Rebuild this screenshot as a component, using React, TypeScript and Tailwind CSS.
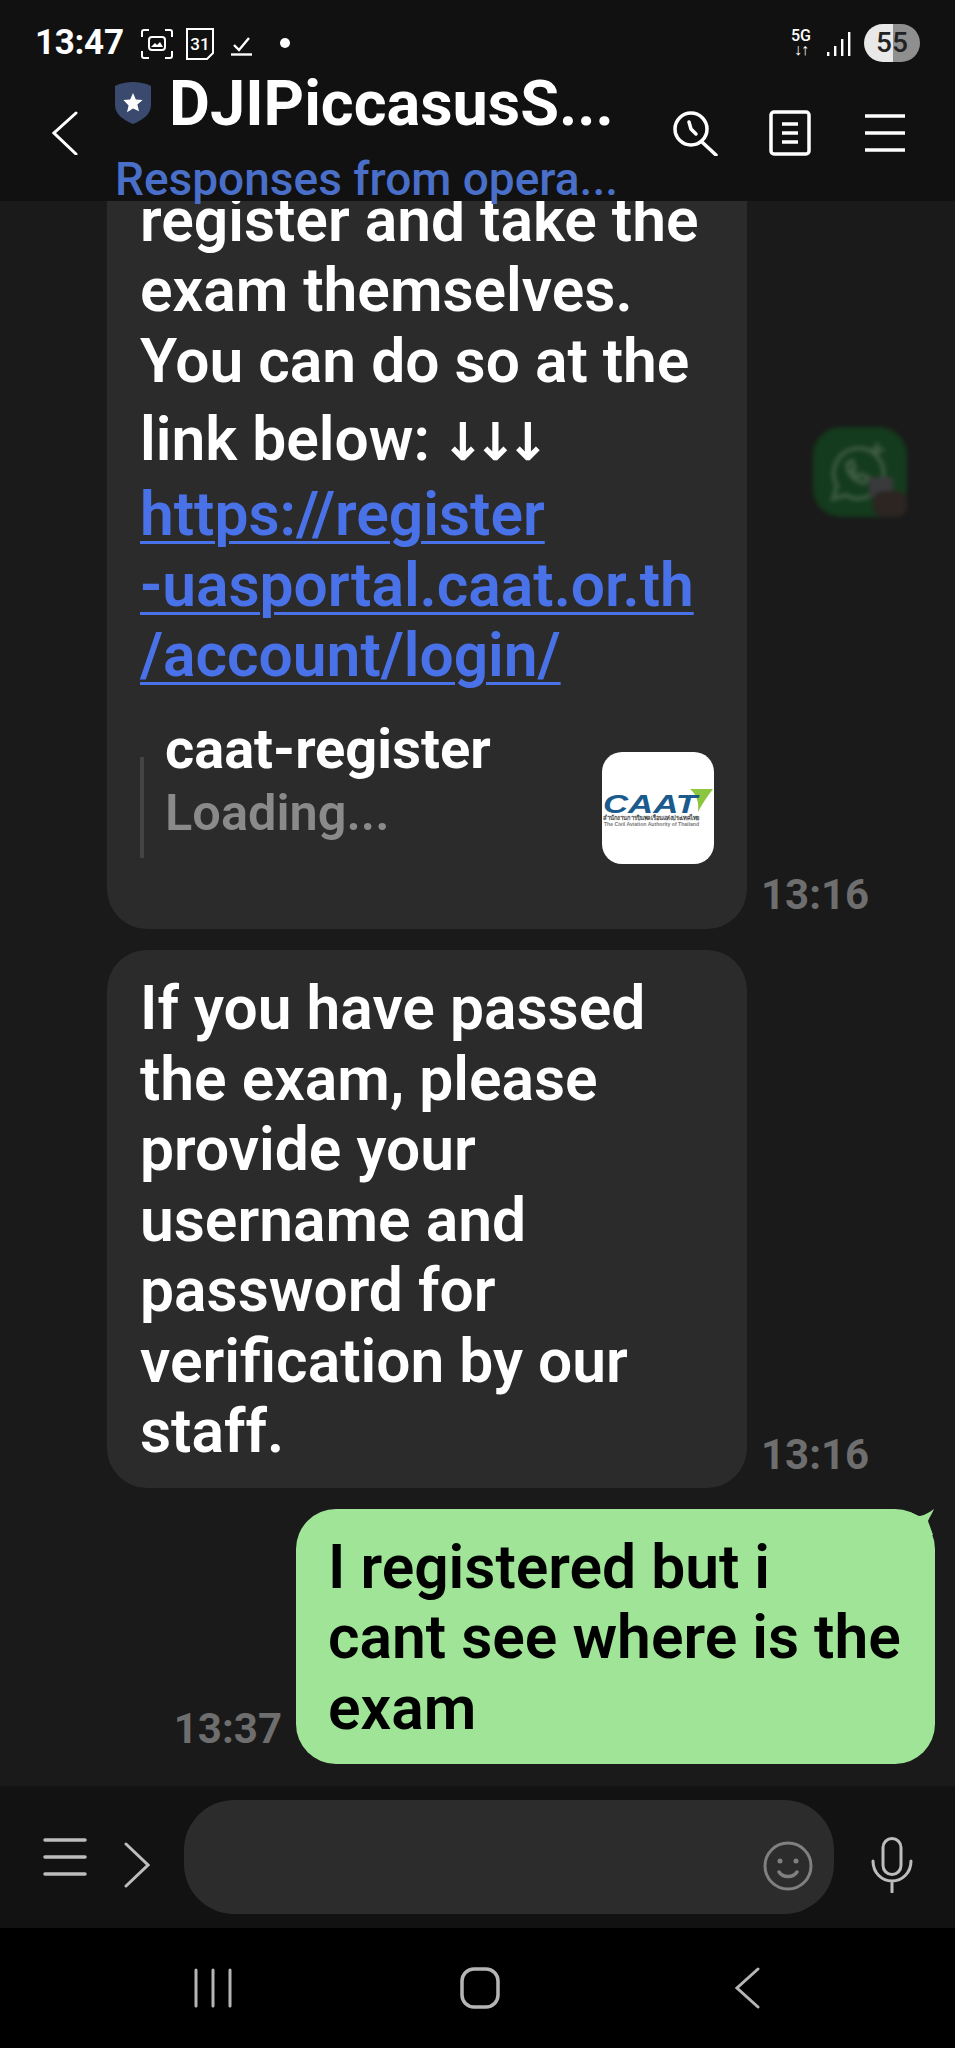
import React from "react";

const Line = ({ c = "" , children }: { c?: string; children: React.ReactNode }) => (
  <div className={"h-[70.5px] leading-[70.5px] whitespace-nowrap " + c}>{children}</div>
);

function StatusBar() {
  return (
    <div className="h-[72px] flex items-start pt-[24px] pl-[35px] pr-[35px] text-white">
      <span className="text-[35px] leading-[38px] font-bold w-[106px] tracking-[-0.3px] shrink-0">13:47</span>
      <svg width="32" height="30" viewBox="0 0 32 30" className="mt-[5px]" fill="none" stroke="white" strokeWidth="2">
        <path d="M1 8V3a2 2 0 0 1 2-2h5M24 1h5a2 2 0 0 1 2 2v5M31 22v5a2 2 0 0 1-2 2h-5M8 29H3a2 2 0 0 1-2-2v-5" />
        <rect x="8" y="8" width="16" height="13" rx="3" />
        <path d="M10 18l4-4 2 2 3-3 3 5z" fill="white" stroke="none" />
      </svg>
      <svg width="30" height="32" viewBox="0 0 30 32" className="ml-[12px] mt-[4px]">
        <path d="M2 1h26v24l-6 6H2z" fill="none" stroke="white" strokeWidth="2" />
        <text x="15" y="22" fontSize="17" fontWeight="500" fill="white" textAnchor="middle" fontFamily="Roboto">31</text>
      </svg>
      <svg width="22" height="20" viewBox="0 0 22 20" className="ml-[16px] mt-[12px]" fill="none" stroke="white" strokeWidth="2.4">
        <path d="M3 9l5 5L18 2" />
        <path d="M0 18.5h21" />
      </svg>
      <span className="ml-[27px] mt-[14px] w-[10px] h-[10px] rounded-full bg-white" />
      <div className="ml-auto flex items-start">
        <div className="w-[22px] mt-[5px] flex flex-col items-center text-[16px] leading-[14px] font-medium">
          <span>5G</span>
          <span className="text-[16px] leading-[14px] font-bold tracking-[-1px] whitespace-nowrap">↓↑</span>
        </div>
        <svg width="24" height="24" viewBox="0 0 24 24" className="ml-[15px] mt-[8px]" fill="white">
          <rect x="0" y="20" width="2.4" height="4" />
          <rect x="7" y="14" width="2.4" height="10" />
          <rect x="14" y="7" width="2.4" height="17" />
          <rect x="21" y="0" width="2.4" height="24" />
        </svg>
        <div className="ml-[13px] w-[56px] h-[38px] rounded-full bg-[linear-gradient(90deg,#e8e8e8_52%,#8f8f8f_52%)] flex items-center justify-center text-[#222] text-[28px] font-medium">
          55
        </div>
      </div>
    </div>
  );
}

function HeaderRow() {
  return (
    <div className="h-[129px] flex items-center pb-[7px]">
      <svg width="26" height="44" viewBox="0 0 26 44" className="ml-[52px] shrink-0" fill="none" stroke="white" strokeWidth="3" strokeLinecap="round">
        <path d="M24 2L2 22l22 21" />
      </svg>
      <div className="ml-[37px] self-start w-[520px] shrink-0">
        <div className="flex items-start h-[63px]">
          <svg width="36" height="42" viewBox="0 0 36 42" className="mt-[10px] shrink-0">
            <path d="M18 0c6 0 12 1 18 4v19c0 9-8 15-18 19C8 38 0 32 0 23V4c6-3 12-4 18-4z" fill="#3a4a6e" />
            <path d="M18 11l2.8 6.4 6.8.6-5.2 4.5 1.6 6.8L18 26.6l-6 3.7 1.6-6.8L8.4 18l6.8-.6z" fill="white" />
          </svg>
          <span className="ml-[18px] text-[63px] leading-[63px] font-bold text-white whitespace-nowrap">DJIPiccasusS...</span>
        </div>
        <div className="mt-[21px] text-[46px] leading-[46px] font-medium text-[#4a6fc8] whitespace-nowrap">Responses from opera...</div>
      </div>
      <svg width="46" height="46" viewBox="0 0 46 46" className="ml-auto shrink-0" fill="none" stroke="white" strokeWidth="3.5" strokeLinecap="round">
        <circle cx="18" cy="19" r="16" />
        <path d="M16 12l2 7 5 5" />
        <path d="M29 32l14 13" />
      </svg>
      <svg width="42" height="46" viewBox="0 0 42 46" className="ml-[50px] shrink-0" fill="none" stroke="white" strokeWidth="3.5">
        <rect x="2" y="2" width="38" height="42" rx="3" />
        <path d="M13 14h16M13 23h16M13 32h16" />
      </svg>
      <svg width="40" height="38" viewBox="0 0 40 38" className="ml-[54px] mr-[50px] shrink-0" fill="none" stroke="white" strokeWidth="3.5">
        <path d="M0 2h40M0 19h40M0 36h40" />
      </svg>
    </div>
  );
}

function CaatLogo() {
  return (
    <div className="w-[112px] h-[112px] rounded-[20px] bg-white shrink-0 overflow-hidden">
      <svg width="112" height="112" viewBox="0 0 112 112">
        <path d="M88 37L111 37C105 45 100 52 96 60C97 50 95 43 88 37z" fill="#8cc63f" />
        <text x="1" y="61" fontSize="25" fontWeight="700" fontStyle="italic" fill="#1b5a8c" fontFamily="Liberation Sans" textLength="94" lengthAdjust="spacingAndGlyphs">CAAT</text>
        <text x="1" y="67.5" fontSize="6.5" fill="#444" fontFamily="Noto Sans, sans-serif" textLength="97" lengthAdjust="spacingAndGlyphs">สำนักงานการบินพลเรือนแห่งประเทศไทย</text>
        <text x="2" y="74" fontSize="4.6" fill="#777" fontFamily="Liberation Sans" textLength="95" lengthAdjust="spacingAndGlyphs">The Civil Aviation Authority of Thailand</text>
      </svg>
    </div>
  );
}

function TimeStamp({ t, c = "" }: { t: string; c?: string }) {
  return <span className={"text-[42px] leading-[50px] font-bold text-[#6e6e6e] whitespace-nowrap " + c}>{t}</span>;
}

const linkClass = "text-[#4a72e8] underline decoration-[3px] underline-offset-[6px]";

export default function App() {
  return (
    <div className="relative w-[955px] h-[2048px] flex flex-col overflow-hidden bg-[#1a1a1a] [font-family:Roboto,sans-serif]">
      <header className="h-[201px] shrink-0 bg-[#111111] z-10">
        <StatusBar />
        <HeaderRow />
      </header>

      <main className="h-[1585px] shrink-0 flex flex-col justify-end overflow-hidden pb-[22px] text-[60.5px] font-semibold">
        <div className="flex items-end pl-[107px]">
          <div className="w-[640px] shrink-0 bg-[#2b2b2b] rounded-[40px] text-white pl-[33px] pr-[20px] pt-[70px] pb-[65.5px]">
            <Line>register and take the</Line>
            <Line>exam themselves.</Line>
            <Line>You can do so at the</Line>
            <Line c="box-content pt-[8px] pb-[4.5px]">link below: <span className="-ml-[4px] [font-family:'DejaVu_Sans'] font-bold text-[52px] tracking-[-11px]">↓↓↓</span></Line>
            <Line c={linkClass}>https://register</Line>
            <Line c={linkClass}>-uasportal.caat.or.th</Line>
            <Line c={linkClass}>/account/login/</Line>
            <div className="mt-[60px] flex items-start">
              <div className="w-[4px] h-[101px] mt-[5px] bg-[#444444] shrink-0" />
              <div className="ml-[21px] -mt-[35px] w-[300px]">
                <div className="text-[56px] leading-[64px] font-bold text-white whitespace-nowrap">caat-register</div>
                <div className="text-[50.5px] leading-[64px] font-semibold text-[#8a8a8a] whitespace-nowrap">Loading...</div>
              </div>
              <div className="ml-auto mr-[13px]"><CaatLogo /></div>
            </div>
          </div>
          <TimeStamp t="13:16" c="ml-[14px] mb-[9px]" />
        </div>

        <div className="flex items-end pl-[107px] mt-[21px]">
          <div className="w-[640px] shrink-0 bg-[#2b2b2b] rounded-[40px] text-white pl-[33px] pt-[24px] pb-[20px]">
            <Line>If you have passed</Line>
            <Line>the exam, please</Line>
            <Line>provide your</Line>
            <Line>username and</Line>
            <Line>password for</Line>
            <Line>verification by our</Line>
            <Line>staff.</Line>
          </div>
          <TimeStamp t="13:16" c="ml-[14px] mb-[8px]" />
        </div>

        <div className="flex items-end justify-end mt-[21px] pr-[20px]">
          <TimeStamp t="13:37" c="mr-[14px] mb-[10px]" />
          <div className="relative w-[639px] bg-[#a0e597] rounded-[40px] text-black pl-[32px] pt-[24px] pb-[20px]">
            <Line>I registered but i</Line>
            <Line>cant see where is the</Line>
            <Line>exam</Line>
            <svg width="30" height="30" viewBox="0 0 30 30" className="absolute right-0 top-0">
              <path d="M5 3C10 5 13 7 15 7C20 6 25 3 29 0C27 5 24 9 23 12C24 15 26 20 28 26L5 26Z" fill="#a0e597" />
            </svg>
          </div>
        </div>
      </main>

      <div className="absolute left-[813px] top-[427px] w-[94px] h-[90px] rounded-[28px] bg-[#143b1d] flex items-center justify-center blur-[2px]">
        <svg width="70" height="70" viewBox="0 0 70 70" fill="none" stroke="#3c5a40" strokeWidth="4">
          <path d="M8 62l4-13a25 25 0 1 1 9 9z" />
          <path d="M22 27c0 10 8 18 18 19l3-6-7-3-3 3c-3-2-5-4-6-7l3-2-3-7z" />
          <path d="M52 6v14M45 13h14" />
        </svg>
        <div className="absolute right-[14px] bottom-[20px] w-[24px] h-[20px] bg-[#3a3a3c]" />
        <div className="absolute right-0 bottom-0 w-[34px] h-[26px] rounded-[10px] bg-[#2c2522]" />
      </div>

      <footer className="h-[142px] shrink-0 bg-[#121212] flex items-center">
        <svg width="44" height="38" viewBox="0 0 44 38" className="ml-[43px] mb-[1px] shrink-0" fill="none" stroke="#bdbdbd" strokeWidth="3.5" strokeLinecap="round">
          <path d="M2 2h40M2 19h40M2 36h40" />
        </svg>
        <svg width="26" height="46" viewBox="0 0 26 46" className="ml-[37px] mt-[16px] shrink-0" fill="none" stroke="#bdbdbd" strokeWidth="3" strokeLinecap="round">
          <path d="M2 2l22 21L2 44" />
        </svg>
        <div className="ml-[34px] w-[650px] h-[114px] rounded-[50px] bg-[#2c2c2c] flex items-center justify-end pr-[21px] shrink-0">
          <svg width="50" height="50" viewBox="0 0 50 50" className="mt-[18px]" fill="none" stroke="#808080" strokeWidth="3">
            <circle cx="25" cy="25" r="23" />
            <circle cx="17" cy="20" r="2.5" fill="#808080" stroke="none" />
            <circle cx="33" cy="20" r="2.5" fill="#808080" stroke="none" />
            <path d="M16 31c4 6 14 6 18 0" strokeLinecap="round" strokeWidth="3.5" />
          </svg>
        </div>
        <svg width="42" height="56" viewBox="0 0 42 56" className="ml-[37px] mt-[15px] shrink-0" fill="none" stroke="#bdbdbd" strokeWidth="3" strokeLinecap="round">
          <rect x="12" y="1.5" width="18" height="36" rx="9" />
          <path d="M2 24c0 12 9 20 19 20s19-8 19-20M21 44v11" />
        </svg>
      </footer>

      <nav className="h-[120px] shrink-0 bg-black flex items-center relative">
        <svg width="38" height="40" viewBox="0 0 38 40" className="ml-[194px] shrink-0" fill="none" stroke="#b5b5b5" strokeWidth="3" strokeLinecap="round">
          <path d="M2 2v36M19 2v36M36 2v36" />
        </svg>
        <svg width="40" height="42" viewBox="0 0 40 42" className="ml-[228px] shrink-0" fill="none" stroke="#b5b5b5" strokeWidth="3.5">
          <rect x="2" y="2" width="36" height="38" rx="12" />
        </svg>
        <svg width="26" height="42" viewBox="0 0 26 42" className="ml-[235px] shrink-0" fill="none" stroke="#b5b5b5" strokeWidth="3" strokeLinecap="round">
          <path d="M23 2L2 21l21 19" />
        </svg>
      </nav>
    </div>
  );
}
